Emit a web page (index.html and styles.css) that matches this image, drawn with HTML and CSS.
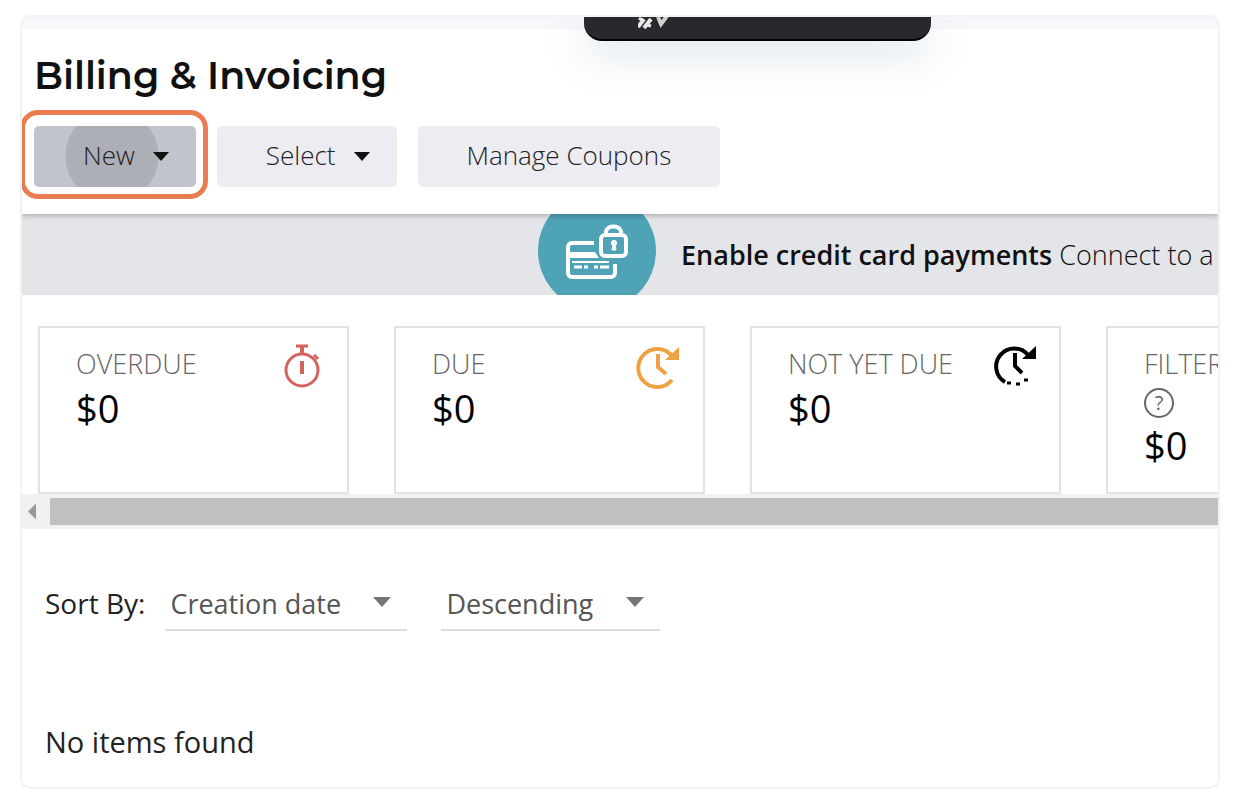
FILE: index.html
```
<!DOCTYPE html>
<html lang="en">
<head>
    <meta charset="UTF-8">
    <title>Billing &amp; Invoicing</title>
    <link rel="stylesheet" href="styles.css">
</head>
<body>
    <div class="frame">
        <header class="page-header">
            <div class="top-strip"></div>
            <div class="floating-bar">
                <svg width="120" height="24" viewBox="0 0 120 24">
                    <path d="M0 10l6-8M6 11l7-9" stroke="#e8e8e8" stroke-width="4" fill="none"/>
                    <path d="M1 1l4 3M9 8l4 1" stroke="#e8e8e8" stroke-width="3" fill="none"/>
                    <path d="M20 0l3 7 6-8" stroke="#d0d0d0" stroke-width="4" fill="none"/>
                </svg>
            </div>
            <h1>Billing &amp; Invoicing</h1>
            <div class="toolbar">
                <button class="btn btn-new" type="button">New <span class="caret"></span></button>
                <button class="btn btn-select" type="button">Select <span class="caret"></span></button>
                <button class="btn btn-coupons" type="button">Manage Coupons</button>
            </div>
        </header>

        <section class="banner">
            <div class="banner-icon">
                <svg width="64" height="60" viewBox="0 0 64 60" fill="none" stroke="#fff" stroke-width="4">
                    <path d="M29 22H7a4 4 0 0 0-4 4v26a4 4 0 0 0 4 4h39a4 4 0 0 0 4-4V43" />
                    <path d="M3 31h27l4 6H3z" fill="#fff" stroke="none"/>
                    <path d="M7 41h37" stroke-width="2"/>
                    <path d="M9 46h8M19 46h4M29 46h4M35 46h9" stroke-width="3"/>
                    <rect x="36" y="14" width="25" height="21" rx="4"/>
                    <path d="M41 13v-3a8 7 0 0 1 15 0v3"/>
                    <circle cx="49" cy="22" r="3" fill="#fff" stroke="none"/>
                    <path d="M47 29h4l-1-6h-2z" fill="#fff" stroke-width="1"/>
                </svg>
            </div>
            <p><strong>Enable credit card payments</strong> Connect to a</p>
        </section>

        <section class="summary">
            <article class="card">
                <div class="card-text">
                    <h2>OVERDUE</h2>
                    <p class="amount">$0</p>
                </div>
                <svg class="card-icon overdue" width="44" height="46" viewBox="0 0 44 46" fill="none" stroke="currentColor" stroke-width="3">
                    <circle cx="23" cy="26" r="16"/>
                    <path d="M17 2h12M35 11l4 4"/>
                    <path d="M23 2v8M23 17v13" stroke-width="4"/>
                </svg>
            </article>
            <article class="card">
                <div class="card-text">
                    <h2>DUE</h2>
                    <p class="amount">$0</p>
                </div>
                <svg class="card-icon due" width="44" height="46" viewBox="0 0 44 46" fill="none" stroke="currentColor" stroke-width="4">
                    <path d="M37 12A19 19 0 1 0 37 36"/>
                    <path d="M44 3v13H30z" fill="currentColor" stroke="none"/>
                    <path d="M23 10v13l8 7"/>
                </svg>
            </article>
            <article class="card">
                <div class="card-text">
                    <h2>NOT YET DUE</h2>
                    <p class="amount">$0</p>
                </div>
                <svg class="card-icon" width="44" height="46" viewBox="0 0 44 46" fill="none" stroke="currentColor" stroke-width="4">
                    <path d="M37 11A18 18 0 1 0 14 38"/>
                    <path d="M45 2v13H31z" fill="currentColor" stroke="none"/>
                    <path d="M24 9v13l7 7"/>
                    <path d="M16 39h4M25 40h4M33 36h4" stroke-width="3"/>
                </svg>
            </article>
            <article class="card">
                <div class="card-text">
                    <h2>FILTER</h2>
                    <button class="help" type="button" aria-label="Help">?</button>
                    <p class="amount">$0</p>
                </div>
            </article>
        </section>
        <div class="scrollbar">
            <button class="scroll-left" type="button" aria-label="Scroll left"></button>
            <div class="scroll-thumb"></div>
        </div>

        <form class="sort">
            <label for="sort-by">Sort By:</label>
            <div class="select-box">
                <select id="sort-by" class="sort-field">
                    <option>Creation date</option>
                </select>
            </div>
            <div class="select-box">
                <select class="sort-order" aria-label="Sort order">
                    <option>Descending</option>
                </select>
            </div>
        </form>

        <p class="empty">No items found</p>
    </div>
</body>
</html>
```
FILE: styles.css
```
* {
    box-sizing: border-box;
}
body {
    margin: 0;
    padding: 15px 34px 13px 20px;
    background: #fff;
    color: #222;
    font-family: "Open Sans", sans-serif;
    font-size: 27px;
    line-height: 36px;
}
h1, h2, p {
    margin: 0;
}
button, select {
    font: inherit;
    color: inherit;
    border: 0;
}
.frame {
    border: 2px solid #f2f2f3;
    border-radius: 10px;
    overflow: hidden;
    padding-bottom: 27px;
}

/* header */
.page-header {
    position: relative;
    z-index: 1;
    background: #fff;
    padding-bottom: 27px;
    box-shadow: 0 1px 6px rgba(0,0,0,0.3);
}
.top-strip {
    height: 12px;
    background: #f7f8fb;
}
.floating-bar {
    position: absolute;
    top: 0;
    left: 47%;
    width: 29%;
    height: 24px;
    padding-left: 54px;
    background: #29282d;
    border-bottom: 2px solid #000;
    border-radius: 0 0 18px 18px;
    box-shadow: 0 12px 40px rgba(90,130,160,0.25);
}
.floating-bar svg {
    display: block;
}
h1 {
    padding: 23px 12px 26px;
    font-family: Montserrat, Inter, sans-serif;
    font-size: 38px;
    font-weight: 600;
    line-height: 48px;
    color: #111;
}
.toolbar {
    display: flex;
    gap: 21px;
    padding-left: 12px;
}
.btn {
    display: flex;
    align-items: center;
    gap: 18px;
    height: 61px;
    padding: 0 49px 4px;
    border-radius: 5px;
    background: #edecf2;
    font-size: 26px;
    font-weight: 300;
}
.btn-new {
    position: relative;
    padding-right: 27px;
    background: radial-gradient(circle at 78px 30px, #acafb6 46px, #c0c4cd 47px);
}
/* highlight ring */
.btn-new::before {
    content: "";
    position: absolute;
    inset: -16px -12px -12px -14px;
    border: 5px solid #e97c50;
    border-radius: 18px;
}
.btn-select {
    padding-right: 27px;
}
.caret {
    margin-top: 4px;
    border: 8px solid transparent;
    border-top: 9px solid #111;
    border-bottom: 0;
}

/* payments banner */
.banner {
    display: flex;
    align-items: center;
    gap: 25px;
    height: 81px;
    padding-left: 516px;
    background: #e4e5e9;
    overflow: hidden;
    white-space: nowrap;
}
.banner-icon {
    display: flex;
    flex: none;
    align-items: center;
    justify-content: center;
    width: 118px;
    height: 118px;
    margin-bottom: 8px;
    border-radius: 50%;
    background: #4fa3b7;
}
.banner p {
    color: #111;
    font-weight: 300;
}
.banner strong {
    font-weight: 600;
}

/* summary cards */
.summary {
    display: flex;
    gap: 45px;
    padding: 31px 16px 0;
    overflow: hidden;
}
.card {
    display: flex;
    flex: none;
    justify-content: space-between;
    width: 311px;
    height: 168px;
    padding: 16px 24px 16px 36px;
    border: 2px solid #e2e2e2;
}
.card h2 {
    color: #666;
    font-size: 27px;
    font-weight: 300;
    line-height: 40px;
}
.amount {
    color: #000;
    font-size: 38px;
    line-height: 48px;
}
.card-icon {
    flex: none;
    overflow: visible;
    color: #000;
}
.overdue {
    color: #d4625f;
}
.due {
    color: #efa245;
}
.help {
    display: block;
    width: 30px;
    height: 30px;
    margin: 4px 0 3px;
    padding: 0;
    border: 2px solid #666;
    border-radius: 50%;
    background: none;
    color: #666;
    font-size: 20px;
    line-height: 24px;
}
.scrollbar {
    display: flex;
    align-items: center;
    height: 35px;
    background: #f1f1f1;
}
.scroll-left {
    width: 8px;
    height: 16px;
    margin: 0 14px 0 6px;
    padding: 0;
    background: #999;
    clip-path: polygon(100% 0, 100% 100%, 0 50%);
}
.scroll-thumb {
    flex: 1;
    height: 27px;
    background: #c0c0c0;
}

/* sorting */
.sort {
    display: flex;
    align-items: center;
    padding: 46px 23px 0;
}
.sort label {
    margin-right: 20px;
    font-size: 28px;
}
.select-box {
    position: relative;
    margin-right: 34px;
    border-bottom: 2px solid #ddd;
}
.select-box::after {
    content: "";
    position: absolute;
    top: 22px;
    right: 16px;
    border: 9px solid transparent;
    border-top: 10px solid #757575;
    border-bottom: 0;
    pointer-events: none;
}
.select-box select {
    display: block;
    height: 54px;
    padding: 3px 0 0 5px;
    appearance: none;
    background: none;
    color: #555;
}
.sort-field {
    width: 242px;
}
.sort-order {
    width: 219px;
}
.empty {
    padding: 93px 23px 0;
    font-size: 29px;
}
```
